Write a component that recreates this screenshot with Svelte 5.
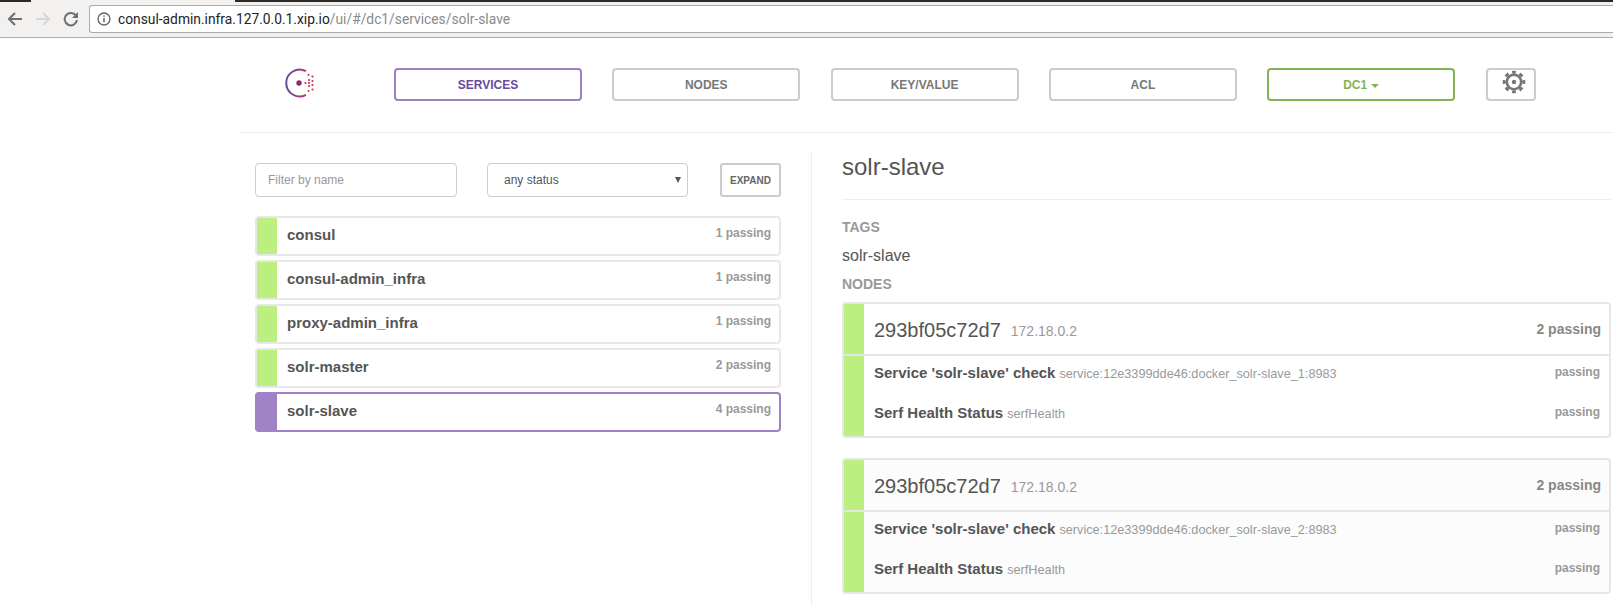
<script lang="ts">
  const navItems = [
    { label: "SERVICES", active: true },
    { label: "NODES" },
    { label: "KEY/VALUE" },
    { label: "ACL" },
  ];

  const services = [
    { name: "consul", passing: 1 },
    { name: "consul-admin_infra", passing: 1 },
    { name: "proxy-admin_infra", passing: 1 },
    { name: "solr-master", passing: 2 },
    { name: "solr-slave", passing: 4, selected: true },
  ];

  const nodes = [
    { id: "293bf05c72d7", ip: "172.18.0.2", instance: 1 },
    { id: "293bf05c72d7", ip: "172.18.0.2", instance: 2, hovered: true },
  ];
</script>

<div class="chrome">
  <div class="tabstrip">
    <span class="tab-dark first"></span>
    <span class="tab-dark rest"></span>
  </div>
  <div class="toolbar">
    <svg class="tool" width="16" height="16" viewBox="0 0 16 16" fill="none" stroke="#6e6e6e" stroke-width="2">
      <path d="M15 8H2M8 2L2 8l6 6" />
    </svg>
    <svg class="tool" width="16" height="16" viewBox="0 0 16 16" fill="none" stroke="#d6d6d6" stroke-width="2">
      <path d="M1 8h13M8 2l6 6-6 6" />
    </svg>
    <svg class="tool" width="16" height="16" viewBox="0 0 16 16" fill="none">
      <path d="M13.2 5A6.2 6.2 0 1 0 14 9" stroke="#6e6e6e" stroke-width="2" />
      <path d="M15 1v6H9z" fill="#6e6e6e" />
    </svg>
    <div class="omnibox">
      <svg width="14" height="14" viewBox="0 0 14 14" fill="none" stroke="#5f6368" stroke-width="1.3">
        <circle cx="7" cy="7" r="6" />
        <path d="M7 6v4.2M7 3.4v1.4" stroke-width="1.5" />
      </svg>
      <span class="url">consul-admin.infra.127.0.0.1.xip.io<span class="url-path">/ui/#/dc1/services/solr-slave</span></span>
    </div>
  </div>
</div>

<div class="page">
  <header class="nav">
    <div class="logo">
      <svg width="32" height="32" viewBox="0 0 32 32" fill="none">
        <defs>
          <linearGradient id="arc" x1="0" y1="0" x2="1" y2="0">
            <stop offset="0" stop-color="#5f4b9e" />
            <stop offset="0.55" stop-color="#8a3f8f" />
            <stop offset="1" stop-color="#d62a60" />
          </linearGradient>
        </defs>
        <path d="M22 4.2A13.4 13.4 0 1 0 22 27.8" stroke="url(#arc)" stroke-width="2" />
        <circle cx="15" cy="16" r="2.7" fill="#8a2d70" />
        <g fill="#d8294f">
          <circle cx="21.5" cy="16" r="1.1" />
          <circle cx="25" cy="13" r="1.1" />
          <circle cx="25" cy="16" r="1.1" />
          <circle cx="25" cy="19" r="1.1" />
          <circle cx="28.5" cy="9.5" r="1.1" />
          <circle cx="28.5" cy="14" r="1.1" />
          <circle cx="28.5" cy="18" r="1.1" />
          <circle cx="28.5" cy="22.5" r="1.1" />
          <circle cx="24.5" cy="8" r="1" />
          <circle cx="24.5" cy="24" r="1" />
        </g>
      </svg>
    </div>
    <nav class="nav-items">
      {#each navItems as item}
        <button class="nav-btn" class:active={item.active}>{item.label}</button>
      {/each}
      <button class="nav-btn dc">DC1<span class="caret"></span></button>
      <button class="nav-btn gear" aria-label="Settings">
        <svg width="24" height="24" viewBox="0 0 24 24" fill="none">
          <circle cx="12" cy="12" r="9.8" stroke="#777" stroke-width="3" pathLength="32" stroke-dasharray="2 2" stroke-dashoffset="1" />
          <circle cx="12" cy="12" r="7.2" stroke="#777" stroke-width="2.6" />
          <circle cx="12" cy="12" r="2.2" fill="#777" />
        </svg>
      </button>
    </nav>
  </header>

  <div class="content">
    <section class="list-col">
      <div class="filters">
        <input class="field filter" type="text" placeholder="Filter by name" />
        <div class="select-wrap">
          <select class="field status">
            <option>any status</option>
          </select>
          <span class="select-arrow"></span>
        </div>
        <button class="expand">EXPAND</button>
      </div>
      <div class="rows">
        {#each services as service}
          <div class="row" class:selected={service.selected}>
            <span class="bar"></span>
            <span class="row-name">{service.name}</span>
            <span class="row-count">{service.passing} passing</span>
          </div>
        {/each}
      </div>
    </section>

    <section class="detail">
      <h2>solr-slave</h2>
      <h5 class="tags-label">TAGS</h5>
      <p class="tag">solr-slave</p>
      <h5 class="nodes-label">NODES</h5>
      {#each nodes as node}
        <div class="card" class:hovered={node.hovered}>
          <div class="card-head">
            <span class="bar"></span>
            <span class="node-id">{node.id}</span>
            <span class="node-ip">{node.ip}</span>
            <span class="node-count">2 passing</span>
          </div>
          <div class="card-body">
            <span class="bar"></span>
            <div class="checks">
              <div class="check">
                <span class="check-name">Service 'solr-slave' check</span>
                <span class="check-id">service:12e3399dde46:docker_solr-slave_{node.instance}:8983</span>
                <span class="check-state">passing</span>
              </div>
              <div class="check">
                <span class="check-name">Serf Health Status</span>
                <span class="check-id">serfHealth</span>
                <span class="check-state">passing</span>
              </div>
            </div>
          </div>
        </div>
      {/each}
    </section>
  </div>
</div>

<style>
  :global(body) {
    margin: 0;
    background: #fff;
    font-family: "Liberation Sans", Arial, sans-serif;
    color: #555;
    overflow: hidden;
  }

  .chrome {
    height: 38px;
    background: #f2f1f0;
    border-bottom: 1px solid #aaa;
    box-sizing: border-box;
  }

  .tabstrip {
    display: flex;
    height: 2px;
  }

  .tab-dark {
    background: #2b2a28;
  }

  .tab-dark.first {
    width: 31px;
    margin-right: 204px;
  }

  .tab-dark.rest {
    flex: 1;
  }

  .toolbar {
    display: flex;
    align-items: center;
    height: 28px;
    margin-top: 3px;
    padding-left: 7px;
  }

  .tool {
    flex: none;
    margin-right: 12px;
  }

  .omnibox {
    flex: 1;
    display: flex;
    align-items: center;
    height: 28px;
    margin-left: -2px;
    padding-left: 7px;
    background: #fff;
    border: 1px solid #a9a9a9;
    border-right: none;
    border-radius: 3px 0 0 3px;
    box-sizing: border-box;
  }

  .url {
    margin-left: 7px;
    font-family: Roboto, sans-serif;
    font-size: 13.8px;
    color: #222;
  }

  .url-path {
    color: #8a8a8a;
  }

  .page {
    margin-left: 240px;
  }

  .nav {
    display: flex;
    height: 95px;
    padding-top: 30px;
    box-sizing: border-box;
    border-bottom: 1px solid #eee;
  }

  .logo {
    width: 154px;
    padding-left: 44px;
    box-sizing: border-box;
    margin-top: -1px;
  }

  .nav-items {
    display: flex;
    gap: 30.3px;
  }

  .nav-btn {
    width: 188px;
    height: 33px;
    padding: 0;
    background: #fff;
    border: 2px solid #ccc;
    border-radius: 4px;
    font-family: inherit;
    font-size: 12px;
    font-weight: 700;
    color: #777;
  }

  .nav-btn.active {
    border-color: #9c7fc1;
    color: #694a9c;
  }

  .nav-btn.dc {
    border-color: #84b356;
    color: #84b356;
  }

  .caret {
    display: inline-block;
    margin-left: 4px;
    vertical-align: 1px;
    border-top: 4px solid #84b356;
    border-left: 4px solid transparent;
    border-right: 4px solid transparent;
  }

  .nav-btn.gear {
    position: relative;
    width: 50px;
    margin-left: 1px;
  }

  .gear svg {
    position: absolute;
    left: 14px;
    top: 0;
  }

  .content {
    display: flex;
  }

  .list-col {
    width: 526px;
    margin-left: 15px;
    padding-top: 30px;
  }

  .filters {
    display: flex;
    margin-bottom: 19px;
  }

  .field {
    height: 34px;
    background: #fff;
    border: 1px solid #ccc;
    border-radius: 4px;
    box-sizing: border-box;
    font-family: inherit;
    font-size: 12px;
    color: #555;
  }

  .filter {
    width: 202px;
    padding: 0 12px;
    margin-right: 30px;
  }

  .filter::placeholder {
    color: #999;
  }

  .select-wrap {
    position: relative;
    width: 201px;
    margin-right: 32px;
  }

  .status {
    width: 100%;
    padding: 0 16px;
    appearance: none;
  }

  .select-arrow {
    position: absolute;
    right: 7px;
    top: 14px;
    border-top: 6px solid #555;
    border-left: 3.5px solid transparent;
    border-right: 3.5px solid transparent;
  }

  .expand {
    width: 61px;
    height: 34px;
    padding: 0;
    background: #fff;
    border: 2px solid #ccc;
    border-radius: 3px;
    font-family: inherit;
    font-size: 10px;
    font-weight: 700;
    color: #666;
  }

  .rows {
    display: flex;
    flex-direction: column;
    gap: 4px;
  }

  .row {
    display: flex;
    height: 40px;
    background: #fff;
    border: 2px solid #e8e8e8;
    border-radius: 4px;
    box-sizing: border-box;
  }

  .bar {
    flex: none;
    width: 20px;
    background: #bbef7f;
  }

  .row.selected {
    border-color: #a083c4;
  }

  .row.selected .bar {
    background: #a083c4;
  }

  .row-name {
    flex: 1;
    padding: 8px 0 0 10px;
    font-size: 15px;
    font-weight: 700;
    line-height: 18px;
    color: #555;
  }

  .row-count {
    padding: 7px 8px 0 0;
    font-size: 12px;
    font-weight: 700;
    line-height: 16px;
    color: #999;
  }

  .detail {
    flex: none;
    width: 769px;
    margin: 19px 0 0 30px;
    padding-left: 30px;
    border-left: 1px solid #eee;
    height: 453px;
  }

  h2 {
    margin: 0 0 19px;
    padding-bottom: 18px;
    border-bottom: 1px solid #eee;
    font-size: 24px;
    font-weight: 400;
    line-height: 29px;
    color: #555;
  }

  h5 {
    margin: 0;
    font-size: 14px;
    font-weight: 700;
    line-height: 16px;
    color: #999;
  }

  .tag {
    margin: 11px 0 10px;
    font-size: 16px;
    line-height: 20px;
    color: #555;
  }

  .nodes-label {
    margin-bottom: 10px;
  }

  .card {
    margin-bottom: 20px;
    background: #fff;
    border: 2px solid #e6e6e6;
    border-radius: 4px;
    box-sizing: border-box;
  }

  .card.hovered {
    background: #fcfcfc;
  }

  .card-head {
    display: flex;
    height: 50px;
    border-bottom: 2px solid #e6e6e6;
    box-sizing: content-box;
  }

  .node-id {
    margin: 14px 0 0 10px;
    font-size: 20px;
    line-height: 24px;
    color: #555;
  }

  .node-ip {
    flex: 1;
    margin: 19px 0 0 10px;
    font-size: 14px;
    line-height: 16px;
    color: #999;
  }

  .node-count {
    margin: 17px 8px 0 0;
    font-size: 14px;
    font-weight: 700;
    line-height: 16px;
    color: #888;
  }

  .card-body {
    display: flex;
  }

  .checks {
    flex: 1;
  }

  .check {
    display: flex;
    align-items: baseline;
    height: 40px;
    padding: 8px 9px 0 10px;
    box-sizing: border-box;
  }

  .check-name {
    font-size: 15px;
    font-weight: 700;
    line-height: 17px;
    color: #555;
  }

  .check-id {
    flex: 1;
    margin-left: 4px;
    font-size: 12.7px;
    color: #999;
  }

  .check-state {
    position: relative;
    top: -2px;
    font-size: 12px;
    font-weight: 700;
    color: #999;
  }
</style>
